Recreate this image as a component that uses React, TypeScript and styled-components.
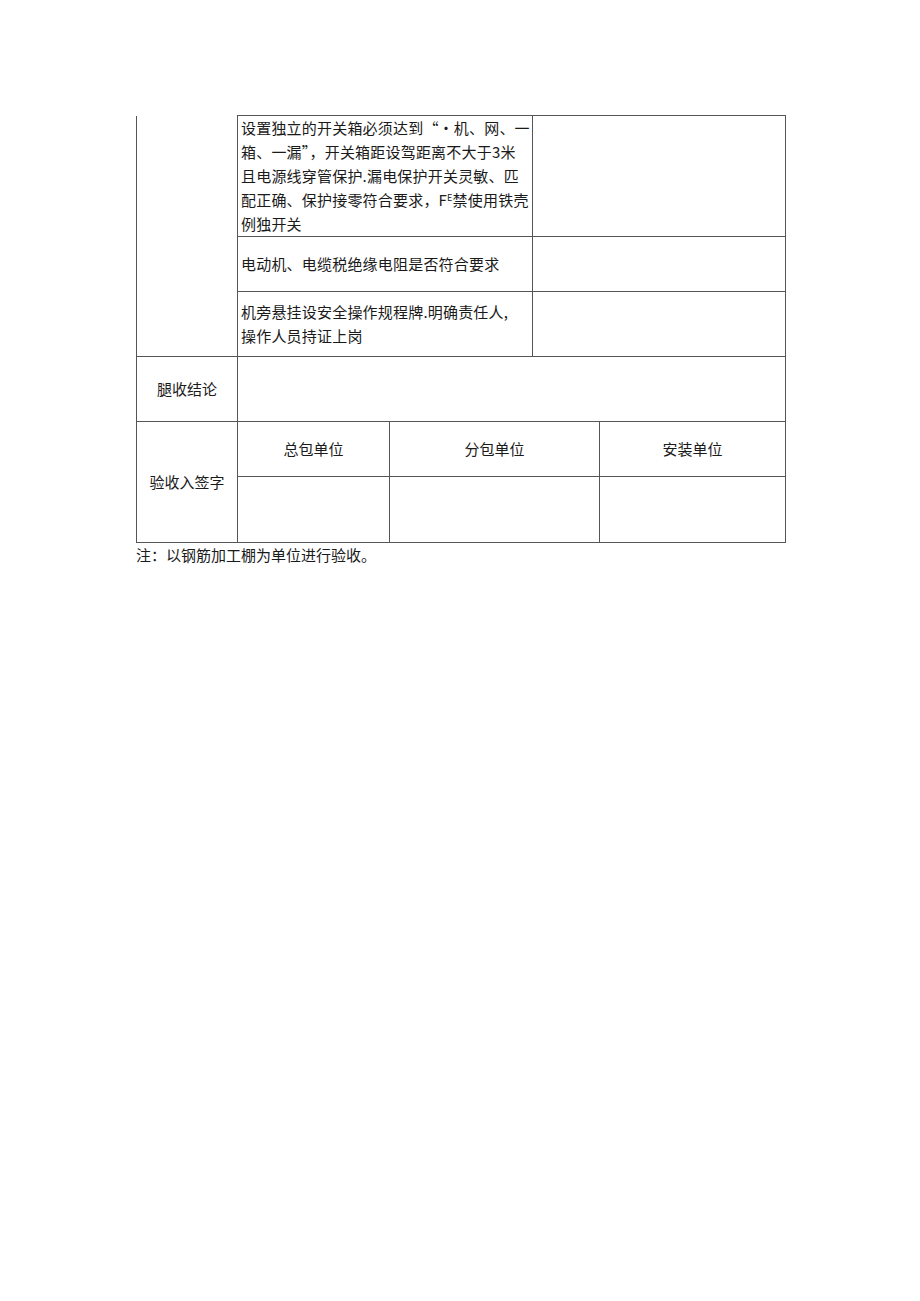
import React from 'react';
import styled, { createGlobalStyle } from 'styled-components';

const GlobalStyle = createGlobalStyle`
  html, body {
    margin: 0;
    padding: 0;
    background: #fff;
  }
`;

// Filas de la tabla de comprobación (parte superior, continuación de la página anterior)
const checkRows = [
  {
    height: 121,
    lines: [
      '设置独立的开关箱必须达到“•机、网、一',
      '箱、一漏”，开关箱距设驾距离不大于3米',
      '且电源线穿管保护.漏电保护开关灵敏、匹',
      'FE',
      '例独开关',
    ],
  },
  { height: 55, lines: ['电动机、电缆税绝缘电阻是否符合要求'] },
  { height: 65, lines: ['机旁悬挂设安全操作规程牌.明确责任人,', '操作人员持证上岗'] },
];

const signUnits = ['总包单位', '分包单位', '安装单位'];

const App: React.FC = () => {
  const renderLine = (line: string, i: number) => {
    // La cuarta línea lleva el superíndice del texto escaneado
    if (line === 'FE') {
      return (
        <React.Fragment key={i}>
          配正确、保护接零符合要求，F<Sup>E</Sup>禁使用铁壳
          <br />
        </React.Fragment>
      );
    }
    return (
      <React.Fragment key={i}>
        {line}
        <br />
      </React.Fragment>
    );
  };

  return (
    <Page>
      <GlobalStyle />
      <Sheet>
        <colgroup>
          <col style={{ width: 101 }} />
          <col style={{ width: 152 }} />
          <col style={{ width: 143 }} />
          <col style={{ width: 67 }} />
          <col style={{ width: 186 }} />
        </colgroup>
        <tbody>
          {checkRows.map((row, idx) => (
            <Row key={idx} $h={row.height}>
              {idx === 0 && <Cell rowSpan={3} $noTop />}
              <TextCell colSpan={2}>{row.lines.map(renderLine)}</TextCell>
              <Cell colSpan={2} />
            </Row>
          ))}

          {/* Conclusión de la aceptación */}
          <Row $h={65}>
            <LabelCell>腿收结论</LabelCell>
            <Cell colSpan={4} />
          </Row>

          {/* Firmas de aceptación */}
          <Row $h={55}>
            <LabelCell rowSpan={2}>验收入签字</LabelCell>
            <LabelCell>{signUnits[0]}</LabelCell>
            <LabelCell colSpan={2}>{signUnits[1]}</LabelCell>
            <LabelCell>{signUnits[2]}</LabelCell>
          </Row>
          <Row $h={66}>
            <Cell />
            <Cell colSpan={2} />
            <Cell />
          </Row>
        </tbody>
      </Sheet>
      <Note>注：以钢筋加工棚为单位进行验收。</Note>
    </Page>
  );
};

export default App;

const Page = styled.div`
  width: 920px;
  min-height: 1301px;
  box-sizing: border-box;
  padding: 115px 0 0 136px;
  font-family: "Noto Sans CJK SC", "Liberation Serif", serif;
  color: #1a1a1a;
`;

const Sheet = styled.table`
  border-collapse: collapse;
  table-layout: fixed;
  width: 650px;
`;

const Row = styled.tr<{ $h: number }>`
  height: ${({ $h }) => $h}px;
`;

const Cell = styled.td<{ $noTop?: boolean }>`
  border: 1px solid #555;
  ${({ $noTop }) => ($noTop ? 'border-top: none;' : '')}
  padding: 0 3px;
  vertical-align: middle;
  font-size: 15px;
  line-height: 24px;
  box-sizing: border-box;
`;

const TextCell = styled(Cell)`
  white-space: nowrap;
  text-align: left;
  letter-spacing: 0.2px;
`;

const LabelCell = styled(Cell)`
  text-align: center;
`;

const Sup = styled.sup`
  font-size: 9px;
  line-height: 0;
  vertical-align: 5px;
`;

const Note = styled.div`
  font-size: 15px;
  line-height: 24px;
`;
